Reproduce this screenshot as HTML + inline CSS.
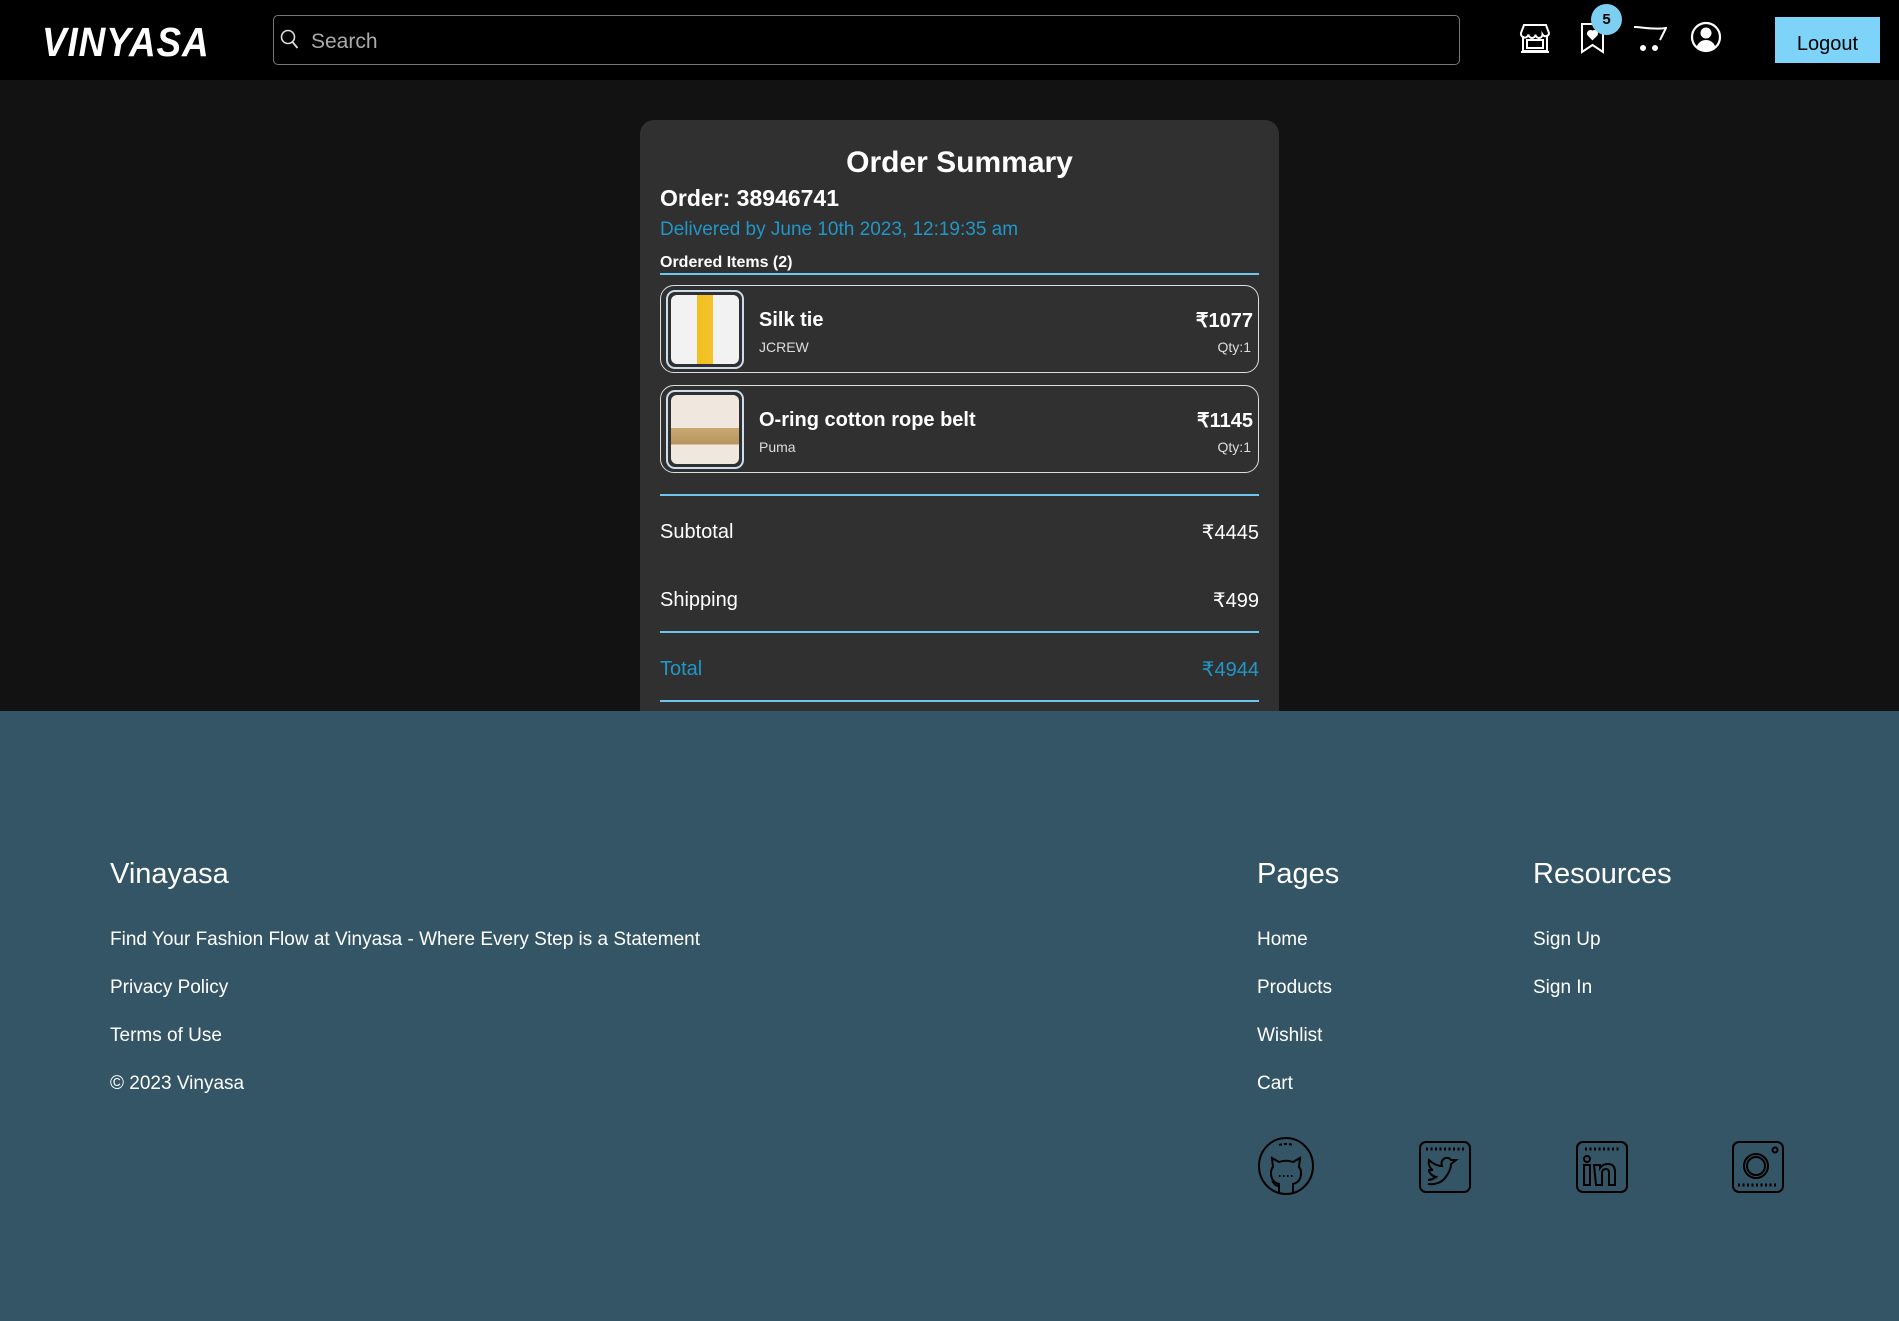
<!DOCTYPE html>
<html><head><meta charset="utf-8"><style>
*{margin:0;padding:0;box-sizing:border-box}
body{width:1899px;height:1321px;overflow:hidden;background:#121212;font-family:"Liberation Sans",sans-serif;color:#fff;position:relative}
.a{position:absolute;white-space:nowrap}
header{position:absolute;left:0;top:0;width:1899px;height:80px;background:#000}
.card{position:absolute;left:640px;top:120px;width:639px;height:620px;background:#303030;border-radius:14px}
.item{position:absolute;left:20px;width:599px;height:88px;border:1.5px solid #ddd;border-radius:14px}
.img{position:absolute;left:5px;top:4px;width:78px;height:79px;border:2px solid #cde;border-radius:9px;padding:3px}
.img div{width:100%;height:100%;border-radius:6px}
.hr{position:absolute;left:20px;width:599px;height:1.5px;background:#6cc6ee}
footer{position:absolute;left:0;top:711px;width:1899px;height:610px;background:#345565}
footer .a{font-size:19px}
</style></head><body>
<header>
<div class="a" style="left:42px;top:19px;font-size:41px;font-weight:bold;font-style:italic;letter-spacing:1px;transform:scaleX(0.9);transform-origin:left">VINYASA</div>
<div class="a" style="left:273px;top:15px;width:1187px;height:50px;border:1px solid #777;border-radius:5px"></div>
<svg class="a" style="left:280px;top:29px" width="20" height="22" viewBox="0 0 20 22"><circle cx="8" cy="8" r="6.5" fill="none" stroke="#ddd" stroke-width="1.6"/><path d="M12.5 13l5 6" stroke="#ddd" stroke-width="1.8"/></svg>
<div class="a" style="left:311px;top:30px;font-size:21px;color:#aaa">Search</div>
<svg class="a" style="left:1519px;top:22px" width="32" height="32" viewBox="0 0 32 32" fill="none" stroke="#fff" stroke-width="2"><path d="M5 3h22l3 8a3.5 3.5 0 0 1-6.5 1.5a3.5 3.5 0 0 1-7 0a3.5 3.5 0 0 1-7 0A3.5 3.5 0 0 1 2 11z"/><path d="M4 14v15h24V14M8 18h16v8H8z"/><path d="M2 30h28"/></svg>
<svg class="a" style="left:1580px;top:22px" width="25" height="32" viewBox="0 0 25 32" fill="none" stroke="#fff" stroke-width="2"><path d="M2 2h21v28l-10.5-7L2 30z"/><path d="M12.5 17l-4-4a2.3 2.3 0 0 1 4-3a2.3 2.3 0 0 1 4 3z" fill="#fff"/></svg>
<div class="a" style="left:1591px;top:4px;width:31px;height:31px;border-radius:50%;background:#7dcff2;color:#000;font-size:15px;font-weight:bold;text-align:center;line-height:31px">5</div>
<svg class="a" style="left:1633px;top:24px" width="34" height="28" viewBox="0 0 34 28" fill="none" stroke="#fff" stroke-width="2"><path d="M1 3c8 0 20 3 32 1l-6 12"/><circle cx="10" cy="24" r="2" fill="#fff"/><circle cx="22" cy="24" r="2" fill="#fff"/></svg>
<svg class="a" style="left:1690px;top:21px" width="32" height="32" viewBox="0 0 32 32"><circle cx="16" cy="16" r="14" fill="none" stroke="#fff" stroke-width="2.2"/><circle cx="16" cy="12" r="5.5" fill="#fff"/><path d="M6.5 26c2-5 5.5-7 9.5-7s7.5 2 9.5 7a14 14 0 0 1-19 0z" fill="#fff"/></svg>
<div class="a" style="left:1775px;top:17px;width:105px;height:46px;background:#7dd3f8;color:#000;font-size:20px;text-align:center;line-height:54px">Logout</div>
</header>
<div class="card">
<div class="a" style="left:0;width:639px;text-align:center;top:26px;font-size:30px;font-weight:bold">Order Summary</div>
<div class="a" style="left:20px;top:65px;font-size:23px;font-weight:bold">Order: 38946741</div>
<div class="a" style="left:20px;top:99px;font-size:19px;color:#2196c7">Delivered by June 10th 2023, 12:19:35 am</div>
<div class="a" style="left:20px;top:134px;font-size:16px;font-weight:bold">Ordered Items (2)</div>
<div class="hr" style="top:153px"></div>
<div class="item" style="top:165px"><div class="img"><div style="background:linear-gradient(90deg,#f2f2f2 38%,#f0c020 38%,#f5c22a 62%,#f2f2f2 62%)"></div></div>
<div class="a" style="left:98px;top:23px;font-size:20px;font-weight:bold">Silk tie</div>
<div class="a" style="left:98px;top:53px;font-size:14px;color:#ddd">JCREW</div>
<div class="a" style="right:5px;top:22px;font-size:20px;font-weight:bold">₹1077</div>
<div class="a" style="right:7px;top:53px;font-size:14px;color:#ddd">Qty:1</div></div>
<div class="item" style="top:265px"><div class="img"><div style="background:linear-gradient(180deg,#f0e8df 48%,#c8a870 48%,#b89560 72%,#f0e8df 72%)"></div></div>
<div class="a" style="left:98px;top:23px;font-size:20px;font-weight:bold">O-ring cotton rope belt</div>
<div class="a" style="left:98px;top:53px;font-size:14px;color:#ddd">Puma</div>
<div class="a" style="right:5px;top:22px;font-size:20px;font-weight:bold">₹1145</div>
<div class="a" style="right:7px;top:53px;font-size:14px;color:#ddd">Qty:1</div></div>
<div class="hr" style="top:374px"></div>
<div class="a" style="left:20px;top:401px;font-size:20px">Subtotal</div>
<div class="a" style="right:20px;top:400px;font-size:20px">₹4445</div>
<div class="a" style="left:20px;top:469px;font-size:20px">Shipping</div>
<div class="a" style="right:20px;top:468px;font-size:20px">₹499</div>
<div class="hr" style="top:511px"></div>
<div class="a" style="left:20px;top:538px;font-size:20px;color:#2196c7">Total</div>
<div class="a" style="right:20px;top:537px;font-size:20px;color:#2196c7">₹4944</div>
<div class="hr" style="top:580px"></div>
</div>
<footer>
<div class="a" style="left:110px;top:147px;font-size:29px">Vinayasa</div>
<div class="a" style="left:110px;top:218px">Find Your Fashion Flow at Vinyasa - Where Every Step is a Statement</div>
<div class="a" style="left:110px;top:266px">Privacy Policy</div>
<div class="a" style="left:110px;top:314px">Terms of Use</div>
<div class="a" style="left:110px;top:362px">© 2023 Vinyasa</div>
<div class="a" style="left:1257px;top:147px;font-size:29px">Pages</div>
<div class="a" style="left:1257px;top:218px">Home</div>
<div class="a" style="left:1257px;top:266px">Products</div>
<div class="a" style="left:1257px;top:314px">Wishlist</div>
<div class="a" style="left:1257px;top:362px">Cart</div>
<div class="a" style="left:1533px;top:147px;font-size:29px">Resources</div>
<div class="a" style="left:1533px;top:218px">Sign Up</div>
<div class="a" style="left:1533px;top:266px">Sign In</div>
<svg class="a" style="left:1257px;top:425px" width="58" height="60" viewBox="0 0 58 60" fill="none" stroke="#000" stroke-width="2"><ellipse cx="29" cy="30" rx="27" ry="28"/><path d="M22 9a25 25 0 0 1 14 0" stroke-dasharray="3 2"/><path d="M22 56v-8c-4-1-8-4-8-11c0-3 1-5 2-6l-1-9 7 4a20 20 0 0 1 14 0l7-4-1 9c1 1 2 3 2 6 0 7-4 10-8 11v8"/><path d="M22 50c-4 0-5-3-7-5" /><path d="M22 40h14" stroke-dasharray="1.5 2.5"/></svg>
<svg class="a" style="left:1419px;top:430px" width="52" height="52" viewBox="0 0 52 52" fill="none" stroke="#000" stroke-width="2"><rect x="1" y="1" width="50" height="50" rx="6"/><path d="M7 8h38" stroke-dasharray="2 2.5" stroke-width="3"/><path d="M9 43c8 1 14-2 17-6 4-5 6-10 6-14l5-4-5 0c-2-3-7-3-9 1-1 2 0 5 0 5-5 0-10-3-13-6-1 4 1 9 4 10l-4 0c0 3 3 6 7 7-3 2-5 3-8 3"/></svg>
<svg class="a" style="left:1576px;top:430px" width="52" height="52" viewBox="0 0 52 52" fill="none" stroke="#000" stroke-width="2"><rect x="1" y="1" width="50" height="50" rx="6"/><path d="M9 8h36" stroke-dasharray="2 2.5" stroke-width="3"/><circle cx="11" cy="18" r="3"/><path d="M8 24h6v20H8zM18 24h6v3c2-3 5-4 8-4 5 0 7 3 7 8v13h-6V32c0-3-1-4-3-4s-4 1-4 4v12h-6z"/></svg>
<svg class="a" style="left:1732px;top:430px" width="52" height="52" viewBox="0 0 52 52" fill="none" stroke="#000" stroke-width="2"><rect x="1" y="1" width="50" height="50" rx="6"/><circle cx="24" cy="25" r="12"/><circle cx="24" cy="25" r="9"/><circle cx="43" cy="9" r="2.5"/><path d="M6 44h40" stroke-dasharray="2 2.5" stroke-width="3"/></svg>
</footer>
</body></html>
